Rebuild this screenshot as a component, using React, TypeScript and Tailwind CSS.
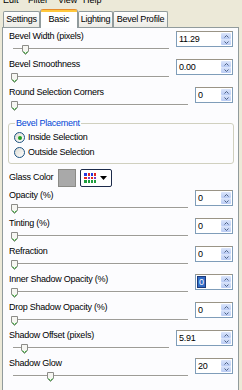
const rows1 = [
  { label: "Bevel Width (pixels)", value: "11.29", wide: true, pos: 12 },
  { label: "Bevel Smoothness", value: "0.00", wide: true, pos: 1 },
  { label: "Round Selection Corners", value: "0", wide: false, pos: 1 },
];

const rows2 = [
  { label: "Opacity (%)", value: "0", wide: false, pos: 1 },
  { label: "Tinting (%)", value: "0", wide: false, pos: 1 },
  { label: "Refraction", value: "0", wide: false, pos: 1 },
  { label: "Inner Shadow Opacity (%)", value: "0", wide: false, pos: 1, selected: true },
  { label: "Drop Shadow Opacity (%)", value: "0", wide: false, pos: 1 },
  { label: "Shadow Offset (pixels)", value: "5.91", wide: true, pos: 11 },
  { label: "Shadow Glow", value: "20", wide: false, pos: 37 },
];

const tabs = [
  { name: "Settings", w: "w-[37px]" },
  { name: "Basic", w: "w-[38px]", active: true },
  { name: "Lighting", w: "w-[35px]" },
  { name: "Bevel Profile", w: "w-[55px]" },
];

const palette = [
  "#2438e0", "#e02424", "#2438e0", "#e02424",
  "#e02424", "#7a3cc8", "#e02424", "#7a3cc8",
  "#1f9e3e", "#1f9e3e", "#1f9e3e", "#1f9e3e",
];

function Thumb() {
  return (
    <svg width="7" height="10" viewBox="0 0 7 10">
      <path d="M0.5 0.5H6.5V6.5L3.5 9.5L0.5 6.5Z" fill="#f6f6f2" stroke="#8c8c88" />
      <path d="M1.3 6.6L3.5 8.6L5.7 6.6" fill="none" stroke="#2aa12a" />
    </svg>
  );
}

function Slider({ pos }: { pos: number }) {
  return (
    <div className="relative ml-[4px] h-[14px]">
      <div className="absolute left-0 right-0 top-[5px] h-[2px] border-t border-b border-t-[#9d9c97] border-b-white" />
      <div className="absolute top-[2px]" style={{ left: pos - 3 }}>
        <Thumb />
      </div>
    </div>
  );
}

function SpinBtn({ up }: { up?: boolean }) {
  return (
    <div className="flex h-[6px] items-center justify-center rounded-[1px] bg-gradient-to-b from-[#dbe5fb] to-[#b9cbf4]">
      <svg width="5" height="3" viewBox="0 0 5 3">
        <path d={up ? "M0.5 2.5L2.5 0.5L4.5 2.5" : "M0.5 0.5L2.5 2.5L4.5 0.5"} fill="none" stroke="#4d6185" strokeWidth="1" />
      </svg>
    </div>
  );
}

function Spin({ value, wide, selected }: { value: string; wide: boolean; selected?: boolean }) {
  return (
    <div className={`mt-[2px] flex h-[16px] border border-[#7f9db9] border-t-[#9a9486] bg-white ${wide ? "w-[57px]" : "w-[38px]"}`}>
      <div className="flex-1 pl-[2px] leading-[14px]">
        {selected ? <span className="bg-[#316ac5] px-[1px] text-white outline outline-1 outline-[#1c3a7a]">{value}</span> : value}
      </div>
      <div className="flex w-[11px] flex-col justify-between py-px pr-px">
        <SpinBtn up />
        <SpinBtn />
      </div>
    </div>
  );
}

function Row({ label, value, wide, pos, selected }: { label: string; value: string; wide: boolean; pos: number; selected?: boolean }) {
  return (
    <div className="flex h-[28px] pl-[6px] pr-[5px]">
      <div className="flex-1 pr-[7px]">
        <div className="h-[14px] leading-[14px]">{label}</div>
        <Slider pos={pos} />
      </div>
      <Spin value={value} wide={wide} selected={selected} />
    </div>
  );
}

function Radio({ label, checked }: { label: string; checked?: boolean }) {
  return (
    <div className="flex h-[15px] items-center gap-[3px] pl-[5px]">
      <div className="flex h-[11px] w-[11px] items-center justify-center rounded-full border border-[#1c5180] bg-gradient-to-br from-[#dcdbd3] to-white">
        {checked && <div className="h-[4px] w-[4px] rounded-full bg-[#21a121]" />}
      </div>
      <span>{label}</span>
    </div>
  );
}

export default function App() {
  return (
    <div className="h-[390px] w-[242px] overflow-hidden bg-[#ece9d8] font-['Liberation_Sans',Arial,sans-serif] text-[9px] tracking-[-0.25px] text-black">
      {/* menu bar, scrolled so only the lower half shows */}
      <div className="h-[7px] overflow-hidden">
        <div className="-mt-[6px] flex pl-[3px] leading-[12px] tracking-normal">
          <span className="w-[25px]">Edit</span>
          <span className="w-[30px]">Filter</span>
          <span className="w-[25px]">View</span>
          <span>Help</span>
        </div>
      </div>

      <div className="mt-[2px] flex h-[18px] items-end pl-[3px]">
        {tabs.map((t) =>
          t.active ? (
            <div key={t.name} className={`relative z-10 -mb-px flex h-[19px] flex-col rounded-t-[3px] border-x border-[#919b9c] bg-white ${t.w}`}>
              <div className="h-[3px] rounded-t-[2px] border-t border-[#e68b2c] bg-[#ffc83c]" />
              <div className="flex flex-1 items-center justify-center pb-[1px]">{t.name}</div>
            </div>
          ) : (
            <div key={t.name} className={`flex h-[16px] items-center justify-center rounded-t-[2px] border border-b-0 border-[#919b9c] bg-gradient-to-b from-white to-[#ecebe5] ${t.w}`}>
              {t.name}
            </div>
          )
        )}
      </div>

      <div className="ml-[2px] h-[400px] w-[237px] border border-[#919b9c] bg-[#fcfcfe] pt-[1px]">
        {rows1.map((r) => (
          <Row key={r.label} {...r} />
        ))}

        <div className="relative ml-[5px] mr-[4px] mt-[10px] h-[41px] rounded-[3px] border border-[#d0d0bf] pt-[6px]">
          <span className="absolute -top-[7px] left-[6px] bg-[#fcfcfe] px-[1px] leading-[12px] text-[#0046d5]">Bevel Placement</span>
          <Radio label="Inside Selection" checked />
          <Radio label="Outside Selection" />
        </div>

        <div className="mt-[4px] flex h-[20px] items-center pl-[6px]">
          <span>Glass Color</span>
          <div className="ml-[5px] h-[18px] w-[18px] border border-[#8a8a86] bg-[#a9a9a9]" />
          <div className="ml-[4px] flex h-[18px] w-[32px] items-center gap-[4px] rounded-[2px] border border-[#1c2a4a] bg-white pl-[3px]">
            <div className="grid h-[10px] w-[12px] grid-cols-4 gap-px">
              {palette.map((c, i) => (
                <div key={i} style={{ backgroundColor: c }} />
              ))}
            </div>
            <svg width="7" height="4" viewBox="0 0 7 4">
              <path d="M0 0H7L3.5 4Z" fill="#000" />
            </svg>
          </div>
        </div>

        {rows2.map((r) => (
          <Row key={r.label} {...r} />
        ))}
      </div>
    </div>
  );
}
